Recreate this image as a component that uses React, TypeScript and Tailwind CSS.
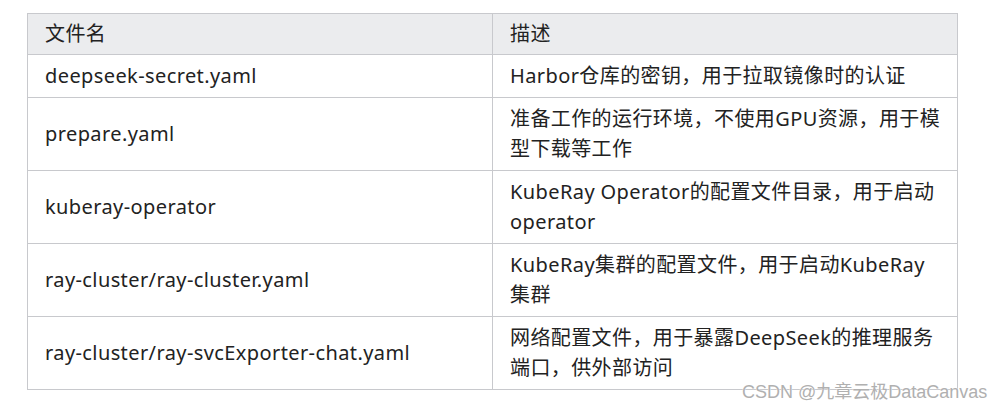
const rows: { name: string; desc: string }[] = [
  { name: "deepseek-secret.yaml", desc: "Harbor仓库的密钥，用于拉取镜像时的认证" },
  { name: "prepare.yaml", desc: "准备工作的运行环境，不使用GPU资源，用于模型下载等工作" },
  { name: "kuberay-operator", desc: "KubeRay Operator的配置文件目录，用于启动operator" },
  { name: "ray-cluster/ray-cluster.yaml", desc: "KubeRay集群的配置文件，用于启动KubeRay集群" },
  { name: "ray-cluster/ray-svcExporter-chat.yaml", desc: "网络配置文件，用于暴露DeepSeek的推理服务端口，供外部访问" },
];

export default function App() {
  return (
    <div
      className="relative w-[990px] h-[411px] bg-white pt-[13px] pl-[27px] text-[#222] overflow-hidden"
      style={{ fontFamily: '"Noto Sans", "Noto Sans CJK SC", sans-serif' }}
    >
      <table className="border-collapse table-fixed w-[931px] text-[20px] leading-[30px] tracking-[0.02em]">
        <thead>
          <tr className="bg-[#ebecee] h-[41px]">
            <th className="border border-[#c8c9cd] w-[465px] px-[17px] text-left font-normal">文件名</th>
            <th className="border border-[#c8c9cd] px-[17px] text-left font-normal">描述</th>
          </tr>
        </thead>
        <tbody>
          {rows.map((r) => (
            <tr key={r.name}>
              <td className="border border-[#c8c9cd] px-[17px] py-[6px] align-middle">{r.name}</td>
              <td className="border border-[#c8c9cd] pl-[17px] pr-[14px] py-[6px] align-middle">{r.desc}</td>
            </tr>
          ))}
        </tbody>
      </table>
      <div
        className="absolute left-[742px] top-[381px] text-[18px] leading-[22px] text-[#b0b0b0] whitespace-nowrap"
        style={{ fontFamily: '"Liberation Sans", "Noto Sans CJK SC", sans-serif', textShadow: "0 0 1px #fff, 0 0 1px #fff" }}
      >
        CSDN @九章云极DataCanvas
      </div>
    </div>
  );
}
